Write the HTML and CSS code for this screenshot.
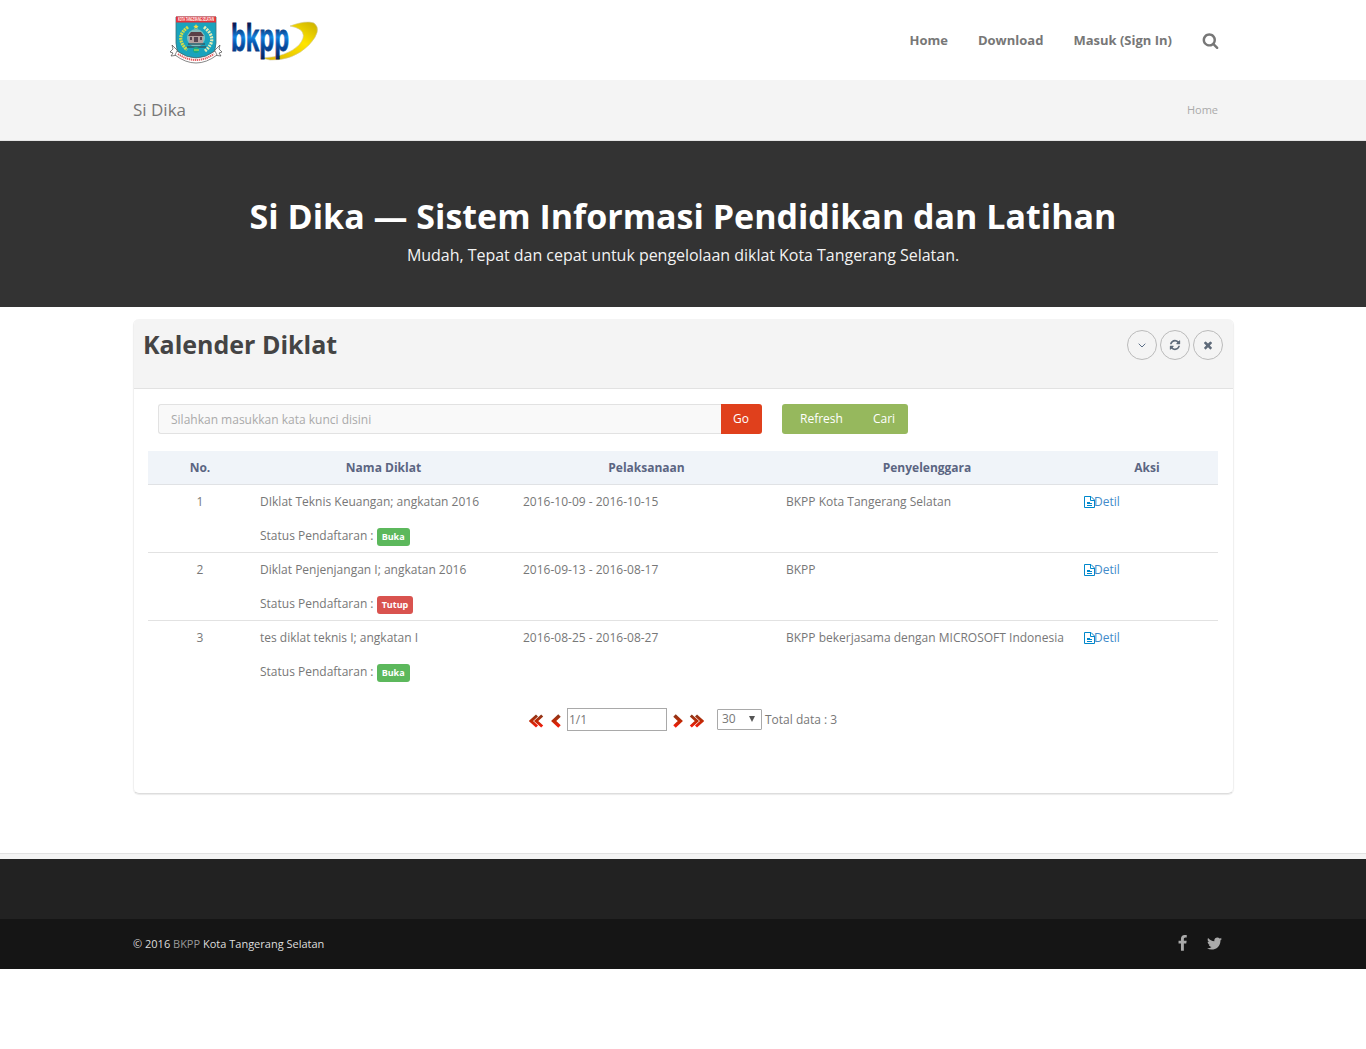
FILE: index.html
```html
<!DOCTYPE html>
<html lang="id">
<head>
<meta charset="utf-8">
<title>Si Dika</title>
<link rel="stylesheet" href="styles.css">
</head>
<body>
<svg class="defs" aria-hidden="true">
  <symbol id="search" viewBox="0 0 1792 1792"><path d="M1216 832q0-185-131.500-316.500t-316.500-131.500-316.500 131.500-131.500 316.500 131.500 316.500 316.500 131.500 316.500-131.500 131.500-316.500zm512 832q0 52-38 90t-90 38q-54 0-90-38l-343-342q-179 124-399 124-143 0-273.500-55.500t-225-150-150-225-55.500-273.500 55.500-273.500 150-225 225-150 273.500-55.500 273.500 55.500 225 150 150 225 55.500 273.500q0 220-124 399l343 343q37 37 37 90z"/></symbol>
  <symbol id="refresh" viewBox="0 0 1792 1792"><path d="M1639 1056q0 5-1 7-64 268-268 434.500t-478 166.500q-146 0-282.500-55t-243.500-157l-129 129q-19 19-45 19t-45-19-19-45v-448q0-26 19-45t45-19h448q26 0 45 19t19 45-19 45l-137 137q71 66 161 102t187 36q134 0 250-65t186-179q11-17 53-117 8-23 30-23h192q13 0 22.500 9.500t9.500 22.500zm25-800v448q0 26-19 45t-45 19h-448q-26 0-45-19t-19-45 19-45l138-138q-148-137-349-137-134 0-250 65t-186 179q-11 17-53 117-8 23-30 23h-199q-13 0-22.500-9.500t-9.500-22.500v-7q65-268 270-434.500t480-166.500q146 0 284 55.500t245 156.500l130-129q19-19 45-19t45 19 19 45z"/></symbol>
  <symbol id="times" viewBox="0 0 1792 1792"><path d="M1490 1322q0 40-28 68l-136 136q-28 28-68 28t-68-28l-294-294-294 294q-28 28-68 28t-68-28l-136-136q-28-28-28-68t28-68l294-294-294-294q-28-28-28-68t28-68l136-136q28-28 68-28t68 28l294 294 294-294q28-28 68-28t68 28l136 136q28 28 28 68t-28 68l-294 294 294 294q28 28 28 68z"/></symbol>
  <symbol id="facebook" viewBox="0 0 1792 1792"><path d="M1343 12v264h-157q-86 0-116 36t-30 108v189h293l-39 296h-254v759h-306v-759h-255v-296h255v-218q0-186 104-288.500t277-102.500q147 0 228 12z"/></symbol>
  <symbol id="twitter" viewBox="0 0 1792 1792"><path d="M1684 408q-67 98-162 167 1 14 1 42 0 130-38 259.500t-115.500 248.500-184.500 210.500-258 146-323 54.500q-271 0-496-145 35 4 78 4 225 0 401-138-105-2-188-64.500t-114-159.500q33 5 61 5 43 0 85-11-112-23-185.500-111.500t-73.500-205.500v-4q68 38 146 41-66-44-105-115t-39-154q0-88 44-163 121 149 294.500 238.500t371.500 99.500q-8-38-8-74 0-134 94.500-228.500t228.500-94.500q140 0 236 102 109-21 205-78-37 115-142 178 93-10 186-50z"/></symbol>
  <symbol id="file" viewBox="0 0 11 12"><path d="M.5.5H7L10.500 4v7.500H.5zM6.500.5V4.500H10.500" fill="none" stroke="currentColor"/><path d="M3 6h3v1H3zM3 7h5v1H3zM3 9h5v1H3z"/></symbol>
  <symbol id="prev" viewBox="0 0 10 14"><path d="M8.500 1.500 2.700 7l5.800 5.500" fill="none" stroke="url(#red)" stroke-width="3.600"/></symbol>
  <symbol id="first" viewBox="0 0 15 14"><path d="M8 1.500 2 7l6 5.500M13.200 1.500 7.200 7l6 5.500" fill="none" stroke="url(#red)" stroke-width="3"/></symbol>
  <linearGradient id="red" x1="0" y1="0" x2="0" y2="1"><stop offset="0" stop-color="#8f3518"/><stop offset=".5" stop-color="#bd2a05"/><stop offset="1" stop-color="#f21c0c"/></linearGradient>
</svg>

<header class="topbar">
  <div class="container topbar-inner">
    <svg class="logo" viewBox="0 0 150 50" role="img" aria-label="BKPP">
      <defs>
        <linearGradient id="blue" x1="0" y1="0" x2="0" y2="1"><stop offset=".2" stop-color="#071b57"/><stop offset=".48" stop-color="#1282df"/><stop offset=".65" stop-color="#0752aa"/><stop offset="1" stop-color="#07215f"/></linearGradient>
        <linearGradient id="gold" x1="0" y1="1" x2="1" y2="0"><stop offset="0" stop-color="#d9b100"/><stop offset=".6" stop-color="#ffe500"/><stop offset="1" stop-color="#c9ae00"/></linearGradient>
      </defs>
      <path d="M7 2h40v26q0 16-20 19Q7 44 7 28z" fill="#19a3bd" stroke="#397278" stroke-width=".8"/>
      <path d="M7 1.500h40v6H7z" fill="#e2333b"/>
      <text x="9" y="6.400" textLength="36" lengthAdjust="spacingAndGlyphs" class="crest-text">KOTA TANGERANG SELATAN</text>
      <path d="M19 12Q5 22 18 35" fill="none" stroke="#d3dc49" stroke-width="3.200" stroke-dasharray="2 .7"/>
      <path d="M35 12q15 12 1 24" fill="none" stroke="#e4ecb6" stroke-width="3.200" stroke-dasharray="2 1"/>
      <path d="m27 9 .8 1.700 1.900.2-1.400 1.300.4 1.900-1.700-1-1.700 1 .4-1.900-1.400-1.300 1.900-.2z" fill="#f1db45"/>
      <circle cx="27" cy="23" r="9" fill="#83bdbe"/>
      <path d="m19 21 3-4h10l3 4z" fill="#5b4047"/><path d="M20 21h14v7H20z" fill="#b5a09f"/>
      <path d="M21 22h2v3h-2zm4 0h4v5h-4zm6 0h2v3h-2z" fill="#574653"/><path d="M19 29h17M18 32h19" stroke="#345b67" stroke-width="1.500"/>
      <circle cx="27" cy="35" r="3" fill="#15aa88"/><path d="M25 35h5" stroke="#d8e14c"/>
      <path d="m3 30 5 5 2 5-8 1 2-3-3-1 3-3zm48 0-5 5-2 5 8 1-2-3 3-1-3-3z" fill="#fff" stroke="#474747" stroke-width=".7"/>
      <path d="M8 36q19 14 38 0l2 4q-21 16-42 0z" fill="#fff" stroke="#555" stroke-width=".7"/>
      <path d="M9 39q18 12 36 0" fill="none" stroke="#e65d60" stroke-width="2" stroke-dasharray="1.300 .7"/>
      <path d="M121 11Q137 5 145 8q9 7-5 22Q124 46 101 45l-8-2q25-1 37-13 12-15-9-19z" fill="url(#gold)" stroke="#d0c797" stroke-width=".6"/>
      <text x="62" y="36" textLength="58" lengthAdjust="spacingAndGlyphs" class="logo-text">bkpp</text>
    </svg>
    <nav class="menu">
      <a>Home</a><a>Download</a><a>Masuk (Sign In)</a>
      <svg class="icon search"><use href="#search"/></svg>
    </nav>
  </div>
</header>

<section class="crumbs">
  <div class="container crumbs-inner"><span class="page-name">Si Dika</span><a class="crumb">Home</a></div>
</section>

<section class="hero">
  <h1>Si Dika — Sistem Informasi Pendidikan dan Latihan</h1>
  <p>Mudah, Tepat dan cepat untuk pengelolaan diklat Kota Tangerang Selatan.</p>
</section>

<main class="panel">
  <header class="panel-head">
    <h2>Kalender Diklat</h2>
    <div class="tools">
      <span class="tool"><svg class="chevron" viewBox="0 0 8 5"><path d="m.7.7 3.300 3.300L7.300.7"/></svg></span>
      <span class="tool"><svg class="icon"><use href="#refresh"/></svg></span>
      <span class="tool"><svg class="icon"><use href="#times"/></svg></span>
    </div>
  </header>
  <div class="panel-body">
    <form class="filter">
      <input class="keyword" type="text" placeholder="Silahkan masukkan kata kunci disini"><button class="go" type="button">Go</button>
      <div class="actions"><a>Refresh</a><a>Cari</a></div>
    </form>
    <table class="courses">
      <colgroup><col class="c-no"><col class="c-name"><col class="c-date"><col class="c-org"><col class="c-act"></colgroup>
      <thead><tr><th>No.</th><th>Nama Diklat</th><th>Pelaksanaan</th><th>Penyelenggara</th><th>Aksi</th></tr></thead>
      <tbody>
        <tr><td class="num">1</td><td>DIklat Teknis Keuangan; angkatan 2016<p class="status">Status Pendaftaran : <span class="label open">Buka</span></p></td><td>2016-10-09 - 2016-10-15</td><td>BKPP Kota Tangerang Selatan</td><td><a class="detail"><svg><use href="#file"/></svg>Detil</a></td></tr>
        <tr><td class="num">2</td><td>Diklat Penjenjangan I; angkatan 2016<p class="status">Status Pendaftaran : <span class="label closed">Tutup</span></p></td><td>2016-09-13 - 2016-08-17</td><td>BKPP</td><td><a class="detail"><svg><use href="#file"/></svg>Detil</a></td></tr>
        <tr><td class="num">3</td><td>tes diklat teknis I; angkatan I<p class="status">Status Pendaftaran : <span class="label open">Buka</span></p></td><td>2016-08-25 - 2016-08-27</td><td>BKPP bekerjasama dengan MICROSOFT Indonesia</td><td><a class="detail"><svg><use href="#file"/></svg>Detil</a></td></tr>
      </tbody>
    </table>
    <div class="pager">
      <svg class="double"><use href="#first"/></svg>
      <svg class="single"><use href="#prev"/></svg>
      <input class="page-no" type="text" value="1/1">
      <svg class="single next"><use href="#prev"/></svg>
      <svg class="double next"><use href="#first"/></svg>
      <span class="size">30<i class="arrow"></i></span>
      <span class="total">Total data : 3</span>
    </div>
  </div>
</main>

<footer class="footer">
  <div class="footer-top"></div>
  <div class="footer-bar">
    <div class="container footer-inner">
      <span>© 2016 <a>BKPP</a> Kota Tangerang Selatan</span>
      <span class="social"><svg class="icon"><use href="#facebook"/></svg><svg class="icon"><use href="#twitter"/></svg></span>
    </div>
  </div>
</footer>
</body>
</html>
```
FILE: styles.css
```css
* { box-sizing: border-box; }
body { margin: 0; background: #fff; color: #777; font: 12px/17px "Open Sans", sans-serif; }
h1, h2, p { margin: 0; }
.defs { position: absolute; width: 0; height: 0; }
.icon { width: 12px; height: 12px; fill: currentColor; }
.container { width: 1100px; margin: 0 auto; display: flex; align-items: center; justify-content: space-between; }

.topbar { height: 80px; }
.topbar-inner { height: 80px; padding: 0 14px 0 36px; }
.logo { width: 150px; height: 50px; }
.crest-text { font: bold 4.500px "Open Sans", sans-serif; fill: #fff; }
.logo-text { font: bold 38px "Liberation Sans", sans-serif; fill: url(#blue); stroke: url(#blue); stroke-width: .8px; }
.menu { display: flex; align-items: center; gap: 30px; font-size: 13px; font-weight: 700; color: #777; }
.search { width: 17px; height: 17px; }

.crumbs { height: 61px; background: #f4f4f4; border-bottom: 1px solid #e4e4e4; }
.crumbs-inner { height: 59px; padding-right: 15px; }
.page-name { font-size: 17px; }
.crumb { font-size: 11px; color: #aaa; }

.hero { height: 166px; background: #333; color: #fff; text-align: center; padding-top: 51px; }
.hero h1 { font-size: 34px; line-height: 49px; font-weight: 700; }
.hero p { font-size: 16px; line-height: 28px; letter-spacing: -.03px; color: #f2f2f2; }

.panel { width: 1101px; height: 475px; margin: 12px 0 0 133px; border: 1px solid #f0f0f0; border-top: 0; border-bottom-color: #ddd; border-radius: 6px; box-shadow: 0 1px 1px rgba(0,0,0,.08); overflow: hidden; }
.panel-head { height: 70px; padding: 11px 10px 0 9px; display: flex; justify-content: space-between; background: #f4f4f4; border-bottom: 1px solid #e2e2e2; }
.panel-head h2 { font-size: 25px; line-height: 28px; color: #444; }
.tools { display: flex; gap: 3px; }
.tool { width: 30px; height: 30px; border: 1px solid #bbb; border-radius: 50%; display: flex; align-items: center; justify-content: center; color: #5e6a79; }
.chevron { width: 8px; height: 5px; fill: none; stroke: #5b6e86; }
.panel-body { padding: 15px 14px 0; }
.filter { display: flex; height: 30px; margin: 0 10px 17px; }
.keyword { width: 563px; border: 1px solid #e2e2e2; border-right: 0; border-radius: 3px 0 0 3px; background: #f9f9f9; padding: 0 12px; font: 12px "Open Sans", sans-serif; }
.keyword::placeholder { color: #aaa; }
.go { width: 41px; padding: 0 1px 2px 0; border: 0; border-radius: 0 3px 3px 0; background: #e0401c; color: #fff; font: 12px "Open Sans", sans-serif; }
.actions { display: flex; align-items: center; gap: 30px; margin-left: 20px; padding: 0 12px 1px 18px; width: 126px; border-radius: 3px; background: #96b85d; color: #fff; }

.courses { width: 1070px; table-layout: fixed; border-collapse: separate; border-spacing: 0; }
.c-no { width: 104px; }
.c-name, .c-date { width: 263px; }
.c-org { width: 298px; }
.c-act { width: 142px; }
th { height: 34px; padding: 8px; background: #f0f4f9; color: #5b6582; border-bottom: 1px solid #e0e2e5; font-weight: 700; }
td { height: 68px; padding: 8px; border-bottom: 1px solid #e2e2e2; vertical-align: top; white-space: nowrap; }
tr:last-child td { border-bottom-color: transparent; }
.num { text-align: center; }
.status { margin-top: 17px; height: 17px; }
.label { display: inline-block; height: 18px; margin-top: 1px; padding: 0 5px; border-radius: 3px; color: #fff; font-size: 9px; line-height: 18px; font-weight: 700; vertical-align: top; }
.open { background: #5cb85c; }
.closed { background: #d9534f; }
.detail { display: flex; align-items: center; color: #428bca; }
.detail svg { width: 11px; height: 12px; margin-right: -1px; color: #0088cc; fill: #0088cc; }

.pager { display: flex; align-items: center; height: 23px; margin: 19px 0 0 381px; }
.double { width: 15px; height: 14px; margin-top: 3px; }
.single { width: 10px; height: 14px; margin: 3px 6px 0 7px; }
.next { transform: scaleX(-1); }
.single.next { margin-left: 6px; }
.page-no { width: 100px; height: 23px; padding: 1px; border: 1px solid #a9a9a9; color: #777; font: 12px "Open Sans", sans-serif; }
.size { display: flex; align-items: center; justify-content: space-between; width: 45px; height: 21px; margin-left: 13px; padding: 0 6px 2px 4px; border: 1px solid #a9a9a9; border-radius: 1px; }
.arrow { border: 3.500px solid transparent; border-top: 6px solid #555; border-bottom: 0; }
.total { margin-left: 3px; }

.footer { margin-top: 59px; border-top: 1px solid #e2e2e2; padding-top: 5px; background: #f4f4f4; }
.footer-top { height: 60px; background: #222; }
.footer-bar { height: 50px; background: #151515; color: #ddd; font-size: 11px; }
.footer-bar a { color: #999; }
.footer-inner { height: 49px; padding-right: 10px; }
.social { display: flex; gap: 15px; color: #aaa; }
.social .icon { width: 17px; height: 17px; }
```
